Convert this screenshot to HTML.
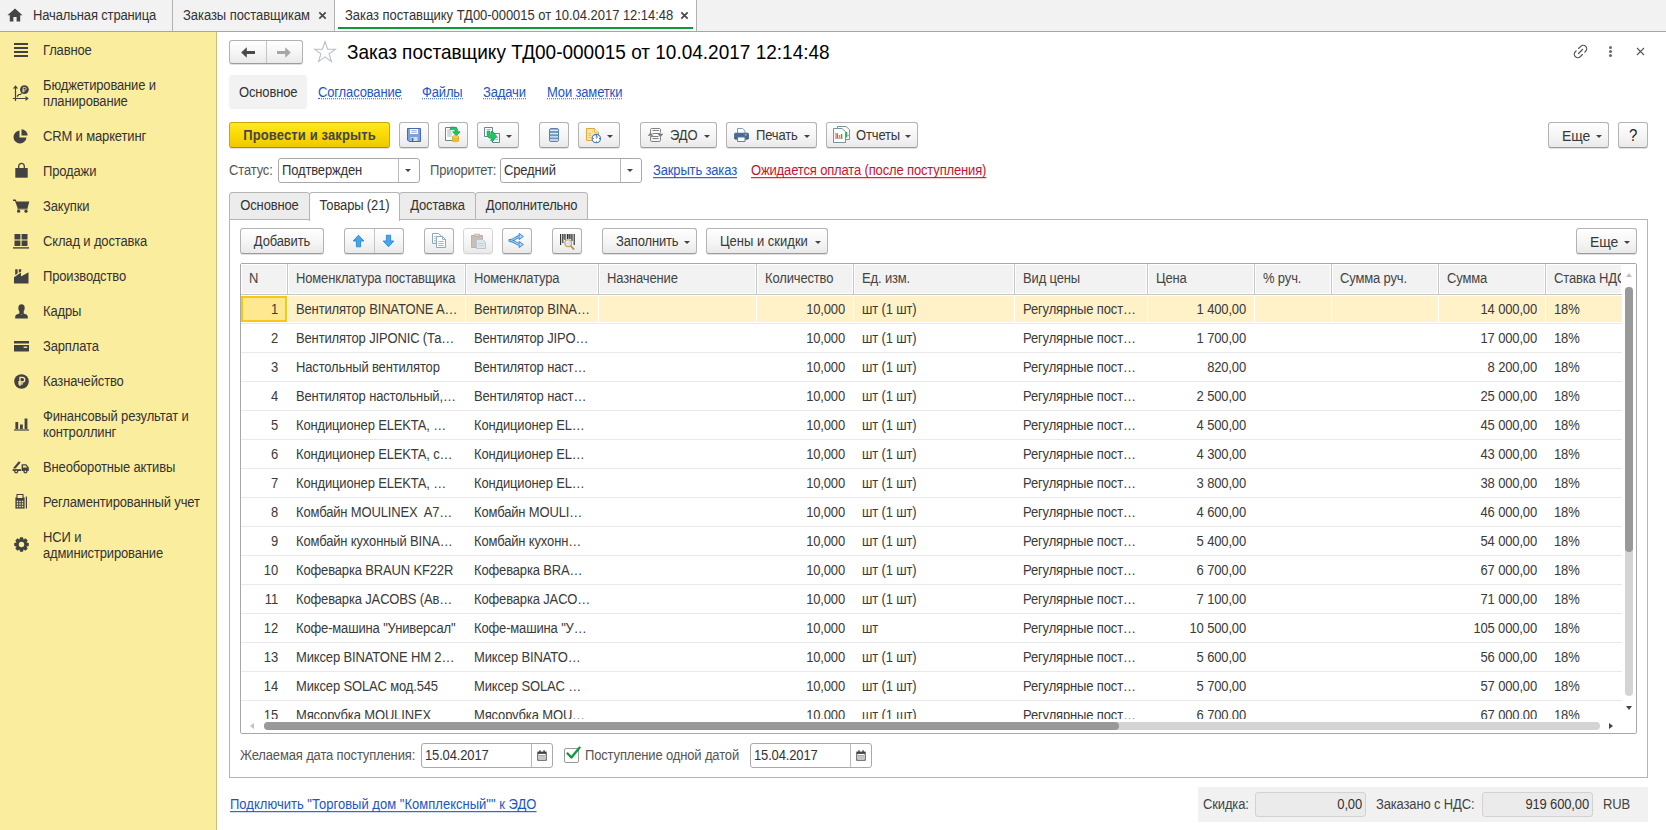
<!DOCTYPE html>
<html lang="ru">
<head>
<meta charset="utf-8">
<title>Заказ поставщику ТД00-000015 от 10.04.2017 12:14:48</title>
<style>
*{box-sizing:border-box;margin:0;padding:0}
html,body{width:1666px;height:830px;overflow:hidden;background:#fff}
body{position:relative;font-family:"Liberation Sans",Arial,sans-serif;font-size:13px;color:#333;line-height:16px;letter-spacing:-0.15px}
.t,.row span,.s{transform:scaleY(1.08);transform-origin:50% 78%}
.s{display:inline-block}
.abs{position:absolute}
.t{position:absolute;white-space:nowrap;height:16px;line-height:16px}
a,.lnk{color:#1b55c9;text-decoration:underline;text-underline-offset:1.5px;text-decoration-skip-ink:none}
.dot{text-decoration:none;border-bottom:1px dotted #2c61cc;height:14px;line-height:16px}
/* top tab bar */
#tabbar{position:absolute;left:0;top:0;width:1666px;height:32px;background:#f2f2f2;border-bottom:1px solid #a6a6a6}
.vsep{position:absolute;top:0;width:1px;height:31px;background:#b0b0b0}
#acttab{position:absolute;left:335px;top:0;width:361px;height:31px;background:#fff}
#actline{position:absolute;left:338px;top:27px;width:355px;height:2px;background:#0d9a3c}
.tx{position:absolute;top:8px;font-size:15px;color:#444;font-weight:bold;line-height:16px}
/* sidebar */
#side{position:absolute;left:0;top:32px;width:217px;height:798px;background:#fbed9e;border-right:1px solid #cdbf78}
#side .t{left:43px;color:#333}
#side svg{position:absolute;left:13px}
/* buttons */
.btn{position:absolute;height:26px;border:1px solid #b3b3b3;border-bottom-color:#9c9c9c;border-radius:3px;background:linear-gradient(#ffffff,#f4f4f4 60%,#e9e9e9);box-shadow:0 1px 0 rgba(0,0,0,.12);text-align:center;line-height:26px;white-space:nowrap;color:#383838}
.btn.y{background:linear-gradient(#ffe922,#f8d800 55%,#efc900);border-color:#c9a900;border-bottom-color:#ab8f00;font-weight:bold;color:#45454a}
.dd{position:absolute;width:0;height:0;border-left:3px solid transparent;border-right:3px solid transparent;border-top:3px solid #444}
.inp{position:absolute;height:25px;border:1px solid #a9a9a9;border-radius:3px;background:#fff;line-height:24px;padding-left:3px;white-space:nowrap;color:#333}
.inp i{position:absolute;top:0;bottom:0;width:1px;background:#b9b9b9}
.ptab{position:absolute;top:192px;height:28px;border:1px solid #b5b5b5;background:#ececec;text-align:center;line-height:25px;color:#333;border-radius:3px 3px 0 0}
.ptab.act{top:192px;height:29px;background:#fff;border-bottom:0;line-height:25px}
#grid{position:absolute;left:240px;top:263px;width:1397px;height:471px;border:1px solid #a8a8a8;border-radius:2px;background:#fff;overflow:hidden}
#ghead{position:absolute;left:0;top:0;width:1381px;height:31px;border-bottom:1px solid #c6c6c6;background:#fff}
#ghead .hc{position:absolute;top:1px;height:28px;background:#f2f2f2;color:#444;white-space:nowrap;overflow:hidden;padding-left:7px;line-height:16px;padding-top:6px}
#ghead b{position:absolute;top:0;width:1px;height:30px;background:#c6c6c6}
#gbody{position:absolute;left:0;top:0;width:1381px;height:455px;overflow:hidden}
.row{position:absolute;left:0;width:1381px;height:29px;border-bottom:1px solid #e9e9e9}
.row span{position:absolute;top:7px;white-space:nowrap;color:#3a3a3a;line-height:16px;height:16px}
.row .r{text-align:right}
.row.sel{background:linear-gradient(#fff 0,#fff 1px,#fff1c8 1px,#fff1c8 27px,#fff 27px)}
.row.sel u{position:absolute;top:0;width:1px;height:28px;background:#fff}
.row.sel em{position:absolute;left:0;top:1px;width:46px;height:26px;border:2px solid #f8c713;background:#ffe88f}
#vsb{position:absolute;left:1381px;top:0;width:14px;height:456px;background:#fff}
#vsb .tr{position:absolute;left:3px;top:23px;width:8px;height:409px;border-radius:4px;background:#d4d4d4}
#vsb .th{position:absolute;left:3px;top:23px;width:8px;height:265px;border-radius:4px;background:#999}
#vsb .au{position:absolute;left:4px;top:9px;border-left:3px solid transparent;border-right:3px solid transparent;border-bottom:4px solid #c0c0c0}
#vsb .ad{position:absolute;left:4px;top:442px;border-left:3px solid transparent;border-right:3px solid transparent;border-top:4px solid #444}
#hsb{position:absolute;left:0;top:455px;width:1395px;height:14px;background:#fff}
#hsb .tr{position:absolute;left:23px;top:3px;width:1336px;height:8px;border-radius:4px;background:#d4d4d4}
#hsb .th{position:absolute;left:23px;top:3px;width:855px;height:8px;border-radius:4px;background:#999}
#hsb .al{position:absolute;left:9px;top:4px;border-top:3px solid transparent;border-bottom:3px solid transparent;border-right:4px solid #c0c0c0}
#hsb .ar{position:absolute;left:1368px;top:4px;border-top:3px solid transparent;border-bottom:3px solid transparent;border-left:4px solid #444}
.inp.ro{background:#ebebeb;border-color:#d2d2d2;text-align:right;padding-right:3px;line-height:24px}
</style>
</head>
<body>
<!-- ===== top tab bar ===== -->
<div id="tabbar">
  <svg class="abs" style="left:7px;top:8px" width="16" height="14" viewBox="0 0 16 14"><path d="M8 0.5 L0.5 7.2 H2.8 V13.5 H6.4 V9 H9.6 V13.5 H13.2 V7.2 H15.5 Z" fill="#444"/></svg>
  <span class="t" style="left:33px;top:8px">Начальная страница</span>
  <div class="vsep" style="left:172px"></div>
  <span class="t" style="left:183px;top:8px;letter-spacing:-0.05px">Заказы поставщикам</span>
  <svg class="abs" style="left:318px;top:11px" width="9" height="9" viewBox="0 0 9 9"><path d="M1.3 1.3L7.7 7.7M7.7 1.3L1.3 7.7" stroke="#4a4a4a" stroke-width="1.7"/></svg>
  <div class="vsep" style="left:334px"></div>
  <div id="acttab"></div>
  <span class="t" style="left:345px;top:8px;letter-spacing:-0.04px">Заказ поставщику ТД00-000015 от 10.04.2017 12:14:48</span>
  <svg class="abs" style="left:680px;top:11px" width="9" height="9" viewBox="0 0 9 9"><path d="M1.3 1.3L7.7 7.7M7.7 1.3L1.3 7.7" stroke="#4a4a4a" stroke-width="1.7"/></svg>
  <div id="actline"></div>
  <div class="vsep" style="left:696px"></div>
</div>

<!-- ===== sidebar ===== -->
<div id="side">
<svg class="abs" style="left:14px;top:11px" width="14" height="14" viewBox="0 0 14 14" ><path d="M0 0h14v2H0zM0 4h14v2H0zM0 8h14v2H0zM0 12h14v2H0z" fill="#424242"/></svg>
<svg class="abs" style="left:12px;top:53px" width="17" height="17" viewBox="0 0 17 17"><g fill="none" stroke="#424242" stroke-width="1.2"><path d="M3.5 16V1.2M0.8 13.5H15.6"/><path d="M1.6 3.6L3.5 1.2L5.4 3.6M13.4 11.6L15.8 13.5L13.4 15.4"/><path d="M5 11.5L6.8 9.5H8.4L9.6 8.4"/></g><circle cx="12.4" cy="4.6" r="4.4" fill="#424242"/><path d="M11.2 7.4V2.4h1.6a1.3 1.3 0 0 1 0 2.6H10.4M10.4 6.2h2.4" fill="none" stroke="#fbed9e" stroke-width="0.8"/></svg>
<svg class="abs" style="left:13px;top:97px" width="15" height="15" viewBox="0 0 15 15" ><path d="M6.5 1.5A6.5 6.5 0 1 0 13.5 8.5H6.5Z" fill="#424242"/><path d="M8.5 0.3A6.3 6.3 0 0 1 14.7 6.5H8.5Z" fill="#424242"/></svg>
<svg class="abs" style="left:15px;top:130px" width="13" height="16" viewBox="0 0 13 16" ><path d="M0.3 6H12.7V15.7H0.3Z" fill="#424242"/><path d="M3.7 8V4.2a2.8 2.8 0 0 1 5.6 0V8" fill="none" stroke="#424242" stroke-width="1.3"/></svg>
<svg class="abs" style="left:13px;top:167px" width="17" height="14" viewBox="0 0 17 14" ><path d="M0 0.6H2.6L3.6 2.5H16.3L14.6 9H4.6L2 1.9H0Z" fill="#424242"/><path d="M4.4 9.8H14.6" stroke="#424242" stroke-width="1.2"/><circle cx="5.6" cy="12.2" r="1.6" fill="#424242"/><circle cx="13" cy="12.2" r="1.6" fill="#424242"/></svg>
<svg class="abs" style="left:13px;top:202px" width="16" height="15" viewBox="0 0 16 15" ><path d="M1.5 0H7.4V5.4H1.5ZM8.6 0H14.5V5.4H8.6ZM1.5 6.6H7.4V12H1.5ZM8.6 6.6H14.5V12H8.6Z" fill="#424242"/><path d="M0 13.2H16V14.6H0Z" fill="#424242"/></svg>
<svg class="abs" style="left:14px;top:237px" width="15" height="15" viewBox="0 0 15 15" ><path d="M0 14.5V8.2L7 3.6V7.4L14.5 3.2V14.5Z" fill="#424242"/><path d="M1.2 6V0.3H3.6V4.6ZM4.8 3.8V0.3H7.2V2.4Z" fill="#424242"/></svg>
<svg class="abs" style="left:15px;top:272px" width="13" height="15" viewBox="0 0 13 15" ><ellipse cx="6.5" cy="4" rx="3.2" ry="3.8" fill="#424242"/><path d="M0.2 14.6V12.6C0.2 10.8 2.4 9.8 4.6 9.4L6.5 10.6L8.4 9.4C10.6 9.8 12.8 10.8 12.8 12.6V14.6Z" fill="#424242"/><path d="M4.3 7h4.4v3H4.3z" fill="#424242"/></svg>
<svg class="abs" style="left:14px;top:309px" width="15" height="11" viewBox="0 0 15 11" ><path d="M0 0H15V2.4H0ZM0 3.9H15V10.6H0Z" fill="#424242"/><path d="M9.6 5.6H13.2V6.9H9.6Z" fill="#fbed9e"/></svg>
<svg class="abs" style="left:14px;top:342px" width="15" height="15" viewBox="0 0 15 15" ><circle cx="7.5" cy="7.5" r="7.3" fill="#424242"/><path d="M6 12V3.4h2.4a2.3 2.3 0 0 1 0 4.6H4.2M4.2 9.9H9" fill="none" stroke="#fbed9e" stroke-width="1.3"/></svg>
<svg class="abs" style="left:14px;top:386px" width="15" height="13" viewBox="0 0 15 13" ><path d="M1.4 4H4.2V11H1.4ZM6 6.4H8.8V11H6ZM10.6 0.6H13.4V11H10.6Z" fill="#424242"/><path d="M0 11.4H15V12.6H0Z" fill="#424242"/></svg>
<svg class="abs" style="left:12px;top:428px" width="18" height="14" viewBox="0 0 18 14" ><path d="M9.6 4.2H14.2L16.8 7.4V11H9.6Z" fill="#424242"/><path d="M11 5.5H13.6L15.3 7.6H11Z" fill="#fbed9e"/><path d="M0.6 9.2H9V11H0.6Z" fill="#424242"/><path d="M1 8.2L6.8 1.2L8.6 2.6L3.6 8.6Z" fill="#424242"/><circle cx="4.2" cy="11.4" r="2" fill="#424242"/><circle cx="13.4" cy="11.4" r="2" fill="#424242"/><circle cx="4.2" cy="11.4" r="0.8" fill="#fbed9e"/><circle cx="13.4" cy="11.4" r="0.8" fill="#fbed9e"/></svg>
<svg class="abs" style="left:15px;top:462px" width="13" height="15" viewBox="0 0 13 15" ><path d="M0.4 3.4H9.6V14.6H0.4Z" fill="#424242"/><path d="M2 0.4H8V4.6H2Z" fill="#fbed9e" stroke="#424242" stroke-width="1.1"/><path d="M1.8 6.8h1.4v1.4H1.8zM4.3 6.8h1.4v1.4H4.3zM6.8 6.8h1.4v1.4H6.8zM1.8 9.3h1.4v1.4H1.8zM4.3 9.3h1.4v1.4H4.3zM6.8 9.3h1.4v1.4H6.8zM1.8 11.8h1.4v1.4H1.8zM4.3 11.8h1.4v1.4H4.3zM6.8 11.8h1.4v1.4H6.8z" fill="#fbed9e"/><path d="M11.4 2.6V14.6" stroke="#424242" stroke-width="1.2"/></svg>
<svg class="abs" style="left:14px;top:505px" width="15" height="15" viewBox="0 0 15 15" ><path d="M6.03 0.25L8.97 0.25L9.55 2.51L9.58 2.52L11.59 1.33L13.67 3.41L12.48 5.42L12.49 5.45L14.75 6.03L14.75 8.97L12.49 9.55L12.48 9.58L13.67 11.59L11.59 13.67L9.58 12.48L9.55 12.49L8.97 14.75L6.03 14.75L5.45 12.49L5.42 12.48L3.41 13.67L1.33 11.59L2.52 9.58L2.51 9.55L0.25 8.97L0.25 6.03L2.51 5.45L2.52 5.42L1.33 3.41L3.41 1.33L5.42 2.52L5.45 2.51Z" fill="#424242"/><circle cx="7.5" cy="7.5" r="2.7" fill="#fbed9e"/></svg>
  <span class="t" style="top:11px">Главное</span>
  <span class="t" style="top:46px">Бюджетирование и</span>
  <span class="t" style="top:62px">планирование</span>
  <span class="t" style="top:97px">CRM и маркетинг</span>
  <span class="t" style="top:132px">Продажи</span>
  <span class="t" style="top:167px">Закупки</span>
  <span class="t" style="top:202px">Склад и доставка</span>
  <span class="t" style="top:237px">Производство</span>
  <span class="t" style="top:272px">Кадры</span>
  <span class="t" style="top:307px">Зарплата</span>
  <span class="t" style="top:342px">Казначейство</span>
  <span class="t" style="top:377px">Финансовый результат и</span>
  <span class="t" style="top:393px">контроллинг</span>
  <span class="t" style="top:428px">Внеоборотные активы</span>
  <span class="t" style="top:463px">Регламентированный учет</span>
  <span class="t" style="top:498px">НСИ и</span>
  <span class="t" style="top:514px">администрирование</span>
</div>

<!-- ===== main ===== -->
<div id="main">
<!-- nav back/forward -->
<div class="btn" style="left:229px;top:40px;width:74px;height:24px"></div>
<div class="abs" style="left:266px;top:41px;width:1px;height:22px;background:#c4c4c4"></div>
<svg class="abs" style="left:241px;top:47px" width="14" height="11" viewBox="0 0 14 11"><path d="M5.8 0.2 L0.2 5.5 L5.8 10.8 V7 H14 V4 H5.8 Z" fill="#4a4a4a"/></svg>
<svg class="abs" style="left:277px;top:47px" width="14" height="11" viewBox="0 0 14 11"><path d="M8.2 0.2 L13.8 5.5 L8.2 10.8 V7 H0 V4 H8.2 Z" fill="#a6a6a6"/></svg>
<!-- star -->
<svg class="abs" style="left:313px;top:40px" width="24" height="24" viewBox="0 0 24 24"><path d="M12 1.6 L14.6 9.2 H22.4 L16.1 13.9 L18.5 21.6 L12 16.9 L5.5 21.6 L7.9 13.9 L1.6 9.2 H9.4 Z" fill="#fff" stroke="#b9bec4" stroke-width="1.1" stroke-linejoin="miter"/></svg>
<span class="t" style="left:347px;top:41px;letter-spacing:0;transform:scaleY(1.06);font-size:19px;line-height:24px;height:24px;color:#000">Заказ поставщику ТД00-000015 от 10.04.2017 12:14:48</span>
<!-- right icons -->
<svg class="abs" style="left:1572px;top:43px" width="17" height="17" viewBox="0 0 17 17" fill="none" stroke="#555" stroke-width="1.25" stroke-linecap="round"><g transform="translate(8.5 8.5) rotate(-45)"><path d="M0.8 -3.5H3.8A3.5 3.5 0 0 1 3.8 3.5H2.6"/><path d="M-0.8 3.5H-3.8A3.5 3.5 0 0 1 -3.8 -3.5H-2.6"/><path d="M-2.8 0H2.8"/></g></svg>
<div class="abs" style="left:1609px;top:46px;width:3px;height:3px;border-radius:2px;background:#6a6a6a;box-shadow:0 4px 0 #6a6a6a,0 8px 0 #6a6a6a"></div>
<svg class="abs" style="left:1636px;top:47px" width="9" height="9" viewBox="0 0 9 9"><path d="M1 1L8 8M8 1L1 8" stroke="#555" stroke-width="1.1"/></svg>

<!-- subnav -->
<div class="abs" style="left:229px;top:75px;width:78px;height:34px;background:#f2f2f2;border-radius:3px"></div>
<span class="t" style="left:239px;top:85px">Основное</span>
<span class="t lnk dot" style="left:318px;top:85px">Согласование</span>
<span class="t lnk dot" style="left:422px;top:85px">Файлы</span>
<span class="t lnk dot" style="left:483px;top:85px">Задачи</span>
<span class="t lnk dot" style="left:547px;top:85px">Мои заметки</span>

<!-- command bar -->
<div class="btn y" style="left:229px;top:122px;width:161px;letter-spacing:0.13px"><span class="s">Провести и закрыть</span></div>
<div class="btn" style="left:399px;top:122px;width:30px"></div>
<div class="btn" style="left:438px;top:122px;width:30px"></div>
<div class="btn" style="left:477px;top:122px;width:42px"></div><i class="dd" style="left:506px;top:135px"></i>
<div class="btn" style="left:539px;top:122px;width:30px"></div>
<div class="btn" style="left:578px;top:122px;width:42px"></div><i class="dd" style="left:607px;top:135px"></i>
<div class="btn" style="left:640px;top:122px;width:77px;text-align:left;padding-left:29px"><span class="s">ЭДО</span></div><i class="dd" style="left:704px;top:135px"></i>
<div class="btn" style="left:726px;top:122px;width:91px;text-align:left;padding-left:29px"><span class="s">Печать</span></div><i class="dd" style="left:804px;top:135px"></i>
<div class="btn" style="left:826px;top:122px;width:92px;text-align:left;padding-left:29px"><span class="s">Отчеты</span></div><i class="dd" style="left:905px;top:135px"></i>
<div class="btn" style="left:1548px;top:122px;width:61px;text-align:left;padding-left:13px;font-size:14px"><span class="s">Еще</span></div><i class="dd" style="left:1596px;top:135px"></i>
<div class="btn" style="left:1618px;top:122px;width:30px;font-size:15px;color:#222"><span class="s">?</span></div>

<svg class="abs" style="left:407px;top:128px" width="14" height="14" viewBox="0 0 14 14" ><path d="M0.5 0.5H13.5V13.5H2L0.5 12Z" fill="#7ea0dd" stroke="#4668ad"/><path d="M3 1H11V6H3Z" fill="#fff"/><path d="M4.2 2.6H9.8M4.2 4.3H9.8" stroke="#8aa6d8" stroke-width="0.9"/><path d="M3.5 9H10.5V13H3.5Z" fill="#d8dce4"/><path d="M4.6 9.8H6.4V13H4.6Z" fill="#4668ad"/></svg>
<svg class="abs" style="left:444px;top:126px" width="17" height="17" viewBox="0 0 17 17" ><path d="M1.5 1.5H12.5V14.5H1.5Z" fill="#fff" stroke="#5f8a96"/><path d="M3.2 4H7M3.2 6H7.5M3.2 8H8M3.2 10H7.5" stroke="#9aa8ae" stroke-width="0.9"/><path d="M6.5 1.2H10.2C12.4 1.2 13.6 2.6 13.6 4.6V5.8H16L12.3 9.8L8.6 5.8H11V4.8C11 3.9 10.5 3.6 9.6 3.6H6.5Z" fill="#1fc866" stroke="#109a48" stroke-width="0.8"/><path d="M8.5 10.5C8.5 9.4 14.5 9.4 14.5 10.5V15C14.5 16.1 8.5 16.1 8.5 15Z" fill="#f7d04a" stroke="#d9a81c" stroke-width="0.8"/><path d="M8.5 12C9.5 13 13.5 13 14.5 12M8.5 13.8C9.5 14.8 13.5 14.8 14.5 13.8" fill="none" stroke="#d9a81c" stroke-width="0.8"/></svg>
<svg class="abs" style="left:484px;top:126px" width="17" height="18" viewBox="0 0 17 18" ><path d="M0.5 1.5H8.5V10.5H0.5Z" fill="#fff" stroke="#5f8a96"/><path d="M2.5 3.6H6.5" stroke="#9ab0b8"/><path d="M8.5 7.5H15.5V16.5H8.5Z" fill="#fff" stroke="#5f8a96"/><path d="M11.5 11.5H14M11.5 13.5H14" stroke="#9ab0b8" stroke-width="0.9"/><path d="M3.2 5.2H5.8V8.2C5.8 9.2 7 9.2 7 8.2V5.6H8.6L12.8 10.4L8.8 15.2L6.6 14.6L8.4 12.2C5 12.6 3.2 11 3.2 8.6Z" fill="#1fc866" stroke="#109a48" stroke-width="0.8"/></svg>
<svg class="abs" style="left:549px;top:128px" width="10" height="14" viewBox="0 0 10 14" ><rect x="0.5" y="0.5" width="9" height="13" rx="1.6" fill="#7fa6c8" stroke="#5583ad"/><path d="M1 2.4H9M1 5.6H9M1 8.8H9M1 12H9" stroke="#dbe7f1" stroke-width="1.3"/><path d="M1 4H9M1 7.2H9M1 10.4H9" stroke="#5583ad" stroke-width="0.6"/></svg>
<svg class="abs" style="left:586px;top:128px" width="15" height="16" viewBox="0 0 15 16" ><path d="M0.5 0.5H8.5L12.5 4.2V12.5H0.5Z" fill="#fbe59b" stroke="#e0a93b"/><path d="M8.5 0.5V4.2H12.5" fill="#fff6d6" stroke="#e0a93b" stroke-width="0.8"/><path d="M2.5 5.5H5M2.5 7.5H5M2.5 9.5H5M6 3H7" stroke="#d8b866" stroke-width="0.8"/><circle cx="10.3" cy="10.6" r="4.2" fill="#fff" stroke="#3f7fc4" stroke-width="1.1"/><path d="M10.3 10.6V8.2L12 9" fill="#7fb1e8" stroke="#3f7fc4" stroke-width="0.7"/><path d="M9.8 6.9h1v1h-1zM9.8 13.3h1v1h-1zM6.6 10.1h1v1h-1zM13 10.1h1v1h-1z" fill="#e02020"/></svg>
<svg class="abs" style="left:647px;top:128px" width="17" height="14" viewBox="0 0 17 14"><g fill="none" stroke="#808080" stroke-width="1"><path d="M3.5 5V1.7Q3.5 0.5 4.7 0.5H12.3Q13.5 0.5 13.5 1.7V4.6"/><path d="M13.5 9.2V12.3Q13.5 13.5 12.3 13.5H4.7Q3.5 13.5 3.5 12.3V8.5"/><path d="M5.5 2.5H12M5.5 5.5H13.5M3.5 8.5H11.5M5.5 10.5H11.5"/></g><path d="M0.6 7.8L3.5 4.4L6.4 7.8Z" fill="#7a7a7a"/><path d="M10.6 5.8L13.5 9.2L16.4 5.8Z" fill="#7a7a7a"/></svg>
<svg class="abs" style="left:734px;top:128px" width="15" height="14" viewBox="0 0 15 14"><path d="M3.5 5.5V0.5H8.6L11 2.8V5.5" fill="#fff" stroke="#6f8db0" stroke-width="0.9"/><rect x="0.4" y="5.2" width="14.2" height="6" rx="1.2" fill="#456b98" stroke="#3a5d88" stroke-width="0.8"/><path d="M3.6 9H11V13.5H3.6Z" fill="#fff" stroke="#52739c" stroke-width="0.9"/><path d="M10.8 6.4h1.8v0.9h-1.8z" fill="#dfe8f2"/></svg>
<svg class="abs" style="left:833px;top:126px" width="17" height="17" viewBox="0 0 17 17" ><path d="M4.5 0.5H13L16.5 3.6V13.5H4.5Z" fill="#fff" stroke="#6b8796" stroke-width="0.9"/><path d="M0.5 2.5H9L12.5 5.6V16.5H0.5Z" fill="#fff" stroke="#6b8796" stroke-width="0.9"/><path d="M2.4 6.5V12.5M2.4 12.5H10" stroke="#999" stroke-width="0.7" fill="none"/><path d="M3.4 7.2h1.5v5h-1.5z" fill="#e0483a"/><path d="M5.6 9h1.5v3.2H5.6z" fill="#e8922a"/><path d="M7.8 8h1.5v4.2H7.8z" fill="#3aa84a"/><path d="M13.6 6v5.5" stroke="#3aa84a" stroke-width="1.4"/><path d="M14.4 9.6h1.4" stroke="#6b8796" stroke-width="0.8"/></svg>
<!-- status row -->
<span class="t" style="left:229px;top:163px;color:#555">Статус:</span>
<div class="inp" style="left:278px;top:158px;width:142px"><span class="s">Подтвержден</span><i style="left:119px"></i></div><i class="dd" style="left:405px;top:169px"></i>
<span class="t" style="left:430px;top:163px;color:#555">Приоритет:</span>
<div class="inp" style="left:500px;top:158px;width:142px"><span class="s">Средний</span><i style="left:119px"></i></div><i class="dd" style="left:627px;top:169px"></i>
<span class="t lnk" style="left:653px;top:163px">Закрыть заказ</span>
<span class="t lnk" style="left:751px;top:163px;color:#c8102e">Ожидается оплата (после поступления)</span>

<!-- page tabs -->
<div class="abs" style="left:229px;top:219px;width:1419px;height:559px;border:1px solid #b5b5b5;background:#fff"></div>
<div class="ptab" style="left:229px;width:81px"><span class="s">Основное</span></div>
<div class="ptab" style="left:399px;width:77px"><span class="s">Доставка</span></div>
<div class="ptab" style="left:475px;width:113px"><span class="s">Дополнительно</span></div>
<div class="ptab act" style="left:309px;width:91px"><span class="s">Товары (21)</span></div>
<!-- sub toolbar -->
<div class="btn" style="left:240px;top:228px;width:84px"><span class="s">Добавить</span></div>
<div class="btn" style="left:344px;top:228px;width:60px"></div>
<div class="abs" style="left:374px;top:229px;width:1px;height:24px;background:#c4c4c4"></div>
<div class="btn" style="left:424px;top:228px;width:30px"></div>
<div class="btn" style="left:463px;top:228px;width:30px;border-color:#d4d4d4;box-shadow:0 1px 0 rgba(0,0,0,.05)"></div>
<div class="btn" style="left:502px;top:228px;width:30px"></div>
<div class="btn" style="left:552px;top:228px;width:30px"></div>
<div class="btn" style="left:602px;top:228px;width:95px;text-align:left;padding-left:13px"><span class="s">Заполнить</span></div><i class="dd" style="left:684px;top:241px"></i>
<div class="btn" style="left:706px;top:228px;width:122px;text-align:left;padding-left:13px;letter-spacing:0"><span class="s">Цены и скидки</span></div><i class="dd" style="left:815px;top:241px"></i>
<div class="btn" style="left:1576px;top:228px;width:61px;text-align:left;padding-left:13px;font-size:14px"><span class="s">Еще</span></div><i class="dd" style="left:1624px;top:241px"></i>

<svg class="abs" style="left:352px;top:234px" width="13" height="14" viewBox="0 0 13 14" ><path d="M6.5 1.2L11.8 7H8.6V12.8H4.4V7H1.2Z" fill="#42a7ee" stroke="#2a86cf" stroke-width="0.9" stroke-linejoin="round"/></svg>
<svg class="abs" style="left:382px;top:234px" width="13" height="14" viewBox="0 0 13 14" ><path d="M6.5 12.8L11.8 7H8.6V1.2H4.4V7H1.2Z" fill="#42a7ee" stroke="#2a86cf" stroke-width="0.9" stroke-linejoin="round"/></svg>
<svg class="abs" style="left:432px;top:233px" width="15" height="15" viewBox="0 0 15 15"><path d="M0.5 0.5H6.5L9.5 3.2V10.5H0.5Z" fill="#fff" stroke="#7f9fb8" stroke-width="0.9"/><path d="M2 3.5H4.5M2 5.5H4M2 7.5H4M2 9H4" stroke="#9db6c9" stroke-width="0.7"/><path d="M4.5 3.5H10.5L13.5 6.4V14.5H4.5Z" fill="#fff" stroke="#7f9fb8" stroke-width="0.9"/><path d="M10.5 3.5V6.4H13.5" fill="none" stroke="#7f9fb8" stroke-width="0.8"/><path d="M6.3 8.5H11.7M6.3 10.5H11.7M6.3 12.5H11.7" stroke="#8aa9c4" stroke-width="0.8"/></svg>
<svg class="abs" style="left:471px;top:233px" width="15" height="16" viewBox="0 0 15 16" ><path d="M0.5 2.5H11.5V14.5H0.5Z" fill="#c9bdb5" stroke="#b9ada5" stroke-width="0.9"/><path d="M3.5 1.2H8.5V3.4H3.5Z" fill="#d8d4d0" stroke="#b5aca6" stroke-width="0.7"/><path d="M5.5 6.5H11.5L14.5 9.2V15.5H5.5Z" fill="#dfe6ea" stroke="#b4c2cb" stroke-width="0.9"/><path d="M7.2 10.5H12.8M7.2 12.5H12.8" stroke="#bccad3" stroke-width="0.8"/></svg>
<svg class="abs" style="left:508px;top:232px" width="17" height="17" viewBox="0 0 17 17"><g fill="none" stroke-linejoin="round"><path d="M12 4.5C8 4.5 6.5 8.5 1.8 8.5C6.5 8.5 8 12.5 12 12.5" stroke="#2f86cc" stroke-width="2.8"/><path d="M11.2 1.4L15.4 4.5L11.2 7.6ZM11.2 9.4L15.4 12.5L11.2 15.6Z" fill="#a9d4f5" stroke="#2f86cc" stroke-width="0.9"/><path d="M12.4 4.5C8 4.5 6.5 8.5 2 8.5C6.5 8.5 8 12.5 12.4 12.5" stroke="#a9d4f5" stroke-width="1.1"/></g></svg>
<svg class="abs" style="left:560px;top:234px" width="15" height="16" viewBox="0 0 15 16" ><path d="M0.6 0V11M2.8 0V9M5 0V6M7.4 0V5M9.8 0V5M12 0V7M14.2 0V11" stroke="#333" stroke-width="1.2"/><path d="M4 0V5" stroke="#333" stroke-width="0.6"/><path d="M8.4 0V4.6M11 0V5.4" stroke="#333" stroke-width="0.7"/><path d="M10.4 11.6L13.6 15" stroke="#b8904a" stroke-width="1.8" stroke-linecap="round"/><circle cx="8.2" cy="9.2" r="3.4" fill="#cfe4f7" stroke="#c9a25c" stroke-width="1.1"/><path d="M6.6 8.8A1.8 1.8 0 0 1 8.4 7.2" stroke="#fff" stroke-width="0.8" fill="none"/></svg>
<!-- grid -->
<div id="grid">
<div id="ghead">
<div class="hc" style="left:1px;width:44px"><span class="s">N</span></div>
<div class="hc" style="left:48px;width:175px"><span class="s">Номенклатура поставщика</span></div><b style="left:46px"></b>
<div class="hc" style="left:226px;width:130px"><span class="s">Номенклатура</span></div><b style="left:224px"></b>
<div class="hc" style="left:359px;width:155px"><span class="s">Назначение</span></div><b style="left:357px"></b>
<div class="hc" style="left:517px;width:94px"><span class="s">Количество</span></div><b style="left:515px"></b>
<div class="hc" style="left:614px;width:158px"><span class="s">Ед. изм.</span></div><b style="left:612px"></b>
<div class="hc" style="left:775px;width:130px"><span class="s">Вид цены</span></div><b style="left:773px"></b>
<div class="hc" style="left:908px;width:104px"><span class="s">Цена</span></div><b style="left:906px"></b>
<div class="hc" style="left:1015px;width:74px"><span class="s">% руч.</span></div><b style="left:1013px"></b>
<div class="hc" style="left:1092px;width:104px"><span class="s">Сумма руч.</span></div><b style="left:1090px"></b>
<div class="hc" style="left:1199px;width:104px"><span class="s">Сумма</span></div><b style="left:1197px"></b>
<div class="hc" style="left:1306px;width:74px"><span class="s">Ставка НДС</span></div><b style="left:1304px"></b>
</div>
<div id="gbody">
<div class="row sel" style="top:31px"><em></em><u style="left:46px"></u><u style="left:224px"></u><u style="left:357px"></u><u style="left:515px"></u><u style="left:612px"></u><u style="left:773px"></u><u style="left:906px"></u><u style="left:1013px"></u><u style="left:1090px"></u><u style="left:1197px"></u><u style="left:1304px"></u><span class="r n" style="left:0;width:37px">1</span><span style="left:55px">Вентилятор BINATONE A…</span><span style="left:233px">Вентилятор BINA…</span><span class="r n" style="left:524px;width:80px">10,000</span><span style="left:621px">шт (1 шт)</span><span style="left:782px">Регулярные пост…</span><span class="r n" style="left:915px;width:90px">1 400,00</span><span class="r n" style="left:1206px;width:90px">14 000,00</span><span class="n" style="left:1313px">18%</span></div>
<div class="row" style="top:60px"><span class="r n" style="left:0;width:37px">2</span><span style="left:55px">Вентилятор JIPONIC (Та…</span><span style="left:233px">Вентилятор JIPO…</span><span class="r n" style="left:524px;width:80px">10,000</span><span style="left:621px">шт (1 шт)</span><span style="left:782px">Регулярные пост…</span><span class="r n" style="left:915px;width:90px">1 700,00</span><span class="r n" style="left:1206px;width:90px">17 000,00</span><span class="n" style="left:1313px">18%</span></div>
<div class="row" style="top:89px"><span class="r n" style="left:0;width:37px">3</span><span style="left:55px">Настольный вентилятор</span><span style="left:233px">Вентилятор наст…</span><span class="r n" style="left:524px;width:80px">10,000</span><span style="left:621px">шт (1 шт)</span><span style="left:782px">Регулярные пост…</span><span class="r n" style="left:915px;width:90px">820,00</span><span class="r n" style="left:1206px;width:90px">8 200,00</span><span class="n" style="left:1313px">18%</span></div>
<div class="row" style="top:118px"><span class="r n" style="left:0;width:37px">4</span><span style="left:55px">Вентилятор настольный,…</span><span style="left:233px">Вентилятор наст…</span><span class="r n" style="left:524px;width:80px">10,000</span><span style="left:621px">шт (1 шт)</span><span style="left:782px">Регулярные пост…</span><span class="r n" style="left:915px;width:90px">2 500,00</span><span class="r n" style="left:1206px;width:90px">25 000,00</span><span class="n" style="left:1313px">18%</span></div>
<div class="row" style="top:147px"><span class="r n" style="left:0;width:37px">5</span><span style="left:55px">Кондиционер ELEKTA, …</span><span style="left:233px">Кондиционер EL…</span><span class="r n" style="left:524px;width:80px">10,000</span><span style="left:621px">шт (1 шт)</span><span style="left:782px">Регулярные пост…</span><span class="r n" style="left:915px;width:90px">4 500,00</span><span class="r n" style="left:1206px;width:90px">45 000,00</span><span class="n" style="left:1313px">18%</span></div>
<div class="row" style="top:176px"><span class="r n" style="left:0;width:37px">6</span><span style="left:55px">Кондиционер ELEKTA, с…</span><span style="left:233px">Кондиционер EL…</span><span class="r n" style="left:524px;width:80px">10,000</span><span style="left:621px">шт (1 шт)</span><span style="left:782px">Регулярные пост…</span><span class="r n" style="left:915px;width:90px">4 300,00</span><span class="r n" style="left:1206px;width:90px">43 000,00</span><span class="n" style="left:1313px">18%</span></div>
<div class="row" style="top:205px"><span class="r n" style="left:0;width:37px">7</span><span style="left:55px">Кондиционер ELEKTA, …</span><span style="left:233px">Кондиционер EL…</span><span class="r n" style="left:524px;width:80px">10,000</span><span style="left:621px">шт (1 шт)</span><span style="left:782px">Регулярные пост…</span><span class="r n" style="left:915px;width:90px">3 800,00</span><span class="r n" style="left:1206px;width:90px">38 000,00</span><span class="n" style="left:1313px">18%</span></div>
<div class="row" style="top:234px"><span class="r n" style="left:0;width:37px">8</span><span style="left:55px">Комбайн MOULINEX&nbsp; A7…</span><span style="left:233px">Комбайн MOULI…</span><span class="r n" style="left:524px;width:80px">10,000</span><span style="left:621px">шт (1 шт)</span><span style="left:782px">Регулярные пост…</span><span class="r n" style="left:915px;width:90px">4 600,00</span><span class="r n" style="left:1206px;width:90px">46 000,00</span><span class="n" style="left:1313px">18%</span></div>
<div class="row" style="top:263px"><span class="r n" style="left:0;width:37px">9</span><span style="left:55px">Комбайн кухонный BINA…</span><span style="left:233px">Комбайн кухонн…</span><span class="r n" style="left:524px;width:80px">10,000</span><span style="left:621px">шт (1 шт)</span><span style="left:782px">Регулярные пост…</span><span class="r n" style="left:915px;width:90px">5 400,00</span><span class="r n" style="left:1206px;width:90px">54 000,00</span><span class="n" style="left:1313px">18%</span></div>
<div class="row" style="top:292px"><span class="r n" style="left:0;width:37px">10</span><span style="left:55px">Кофеварка BRAUN KF22R</span><span style="left:233px">Кофеварка BRA…</span><span class="r n" style="left:524px;width:80px">10,000</span><span style="left:621px">шт (1 шт)</span><span style="left:782px">Регулярные пост…</span><span class="r n" style="left:915px;width:90px">6 700,00</span><span class="r n" style="left:1206px;width:90px">67 000,00</span><span class="n" style="left:1313px">18%</span></div>
<div class="row" style="top:321px"><span class="r n" style="left:0;width:37px">11</span><span style="left:55px">Кофеварка JACOBS (Ав…</span><span style="left:233px">Кофеварка JACO…</span><span class="r n" style="left:524px;width:80px">10,000</span><span style="left:621px">шт (1 шт)</span><span style="left:782px">Регулярные пост…</span><span class="r n" style="left:915px;width:90px">7 100,00</span><span class="r n" style="left:1206px;width:90px">71 000,00</span><span class="n" style="left:1313px">18%</span></div>
<div class="row" style="top:350px"><span class="r n" style="left:0;width:37px">12</span><span style="left:55px">Кофе-машина &quot;Универсал&quot;</span><span style="left:233px">Кофе-машина &quot;У…</span><span class="r n" style="left:524px;width:80px">10,000</span><span style="left:621px">шт</span><span style="left:782px">Регулярные пост…</span><span class="r n" style="left:915px;width:90px">10 500,00</span><span class="r n" style="left:1206px;width:90px">105 000,00</span><span class="n" style="left:1313px">18%</span></div>
<div class="row" style="top:379px"><span class="r n" style="left:0;width:37px">13</span><span style="left:55px">Миксер BINATONE HM 2…</span><span style="left:233px">Миксер BINATO…</span><span class="r n" style="left:524px;width:80px">10,000</span><span style="left:621px">шт (1 шт)</span><span style="left:782px">Регулярные пост…</span><span class="r n" style="left:915px;width:90px">5 600,00</span><span class="r n" style="left:1206px;width:90px">56 000,00</span><span class="n" style="left:1313px">18%</span></div>
<div class="row" style="top:408px"><span class="r n" style="left:0;width:37px">14</span><span style="left:55px">Миксер SOLAC мод.545</span><span style="left:233px">Миксер SOLAC …</span><span class="r n" style="left:524px;width:80px">10,000</span><span style="left:621px">шт (1 шт)</span><span style="left:782px">Регулярные пост…</span><span class="r n" style="left:915px;width:90px">5 700,00</span><span class="r n" style="left:1206px;width:90px">57 000,00</span><span class="n" style="left:1313px">18%</span></div>
<div class="row" style="top:437px"><span class="r n" style="left:0;width:37px">15</span><span style="left:55px">Мясорубка MOULINEX</span><span style="left:233px">Мясорубка MOU…</span><span class="r n" style="left:524px;width:80px">10,000</span><span style="left:621px">шт (1 шт)</span><span style="left:782px">Регулярные пост…</span><span class="r n" style="left:915px;width:90px">6 700,00</span><span class="r n" style="left:1206px;width:90px">67 000,00</span><span class="n" style="left:1313px">18%</span></div>
</div>
<div id="vsb"><i class="au"></i><div class="tr"></div><div class="th"></div><i class="ad"></i></div>
<div id="hsb"><i class="al"></i><div class="tr"></div><div class="th"></div><i class="ar"></i></div>
</div>
<!-- bottom fields -->
<span class="t" style="left:240px;top:748px;color:#555">Желаемая дата поступления:</span>
<div class="inp" style="left:421px;top:743px;width:132px"><span class="s">15.04.2017</span><i style="left:109px"></i></div>
<div class="inp" style="left:750px;top:743px;width:122px"><span class="s">15.04.2017</span><i style="left:99px"></i></div>
<div class="abs" style="left:564px;top:748px;width:15px;height:15px;border:1px solid #9a9a9a;border-radius:2px;background:#fff"></div>
<svg class="abs" style="left:566px;top:746px" width="16" height="14" viewBox="0 0 16 14"><path d="M1.6 7.4 L5.4 11.6 L13.6 1.6" fill="none" stroke="#0d9a3c" stroke-width="2.3" stroke-linecap="round" stroke-linejoin="round"/></svg>
<span class="t" style="left:585px;top:748px;color:#555">Поступление одной датой</span>
<svg class="abs" style="left:537px;top:750px" width="10" height="11" viewBox="0 0 10 11"><path d="M0.3 1.6H9.7V10.7H0.3Z" fill="#444"/><path d="M1.3 3.9H8.7V9.7H1.3Z" fill="#fff"/><path d="M2.2 0.2h1.4v2.2H2.2zM6.4 0.2h1.4v2.2H6.4z" fill="#444"/><path d="M2.4 5.2h1.2v1.2H2.4zM4.4 5.2h1.2v1.2H4.4zM6.4 5.2h1.2v1.2H6.4zM2.4 7.4h1.2v1.2H2.4zM4.4 7.4h1.2v1.2H4.4zM6.4 7.4h1.2v1.2H6.4z" fill="#444"/></svg>
<svg class="abs" style="left:856px;top:750px" width="10" height="11" viewBox="0 0 10 11"><path d="M0.3 1.6H9.7V10.7H0.3Z" fill="#444"/><path d="M1.3 3.9H8.7V9.7H1.3Z" fill="#fff"/><path d="M2.2 0.2h1.4v2.2H2.2zM6.4 0.2h1.4v2.2H6.4z" fill="#444"/><path d="M2.4 5.2h1.2v1.2H2.4zM4.4 5.2h1.2v1.2H4.4zM6.4 5.2h1.2v1.2H6.4zM2.4 7.4h1.2v1.2H2.4zM4.4 7.4h1.2v1.2H4.4zM6.4 7.4h1.2v1.2H6.4z" fill="#444"/></svg>
<!-- footer -->
<span class="t lnk" style="left:230px;top:797px;letter-spacing:0.02px">Подключить &quot;Торговый дом &quot;Комплексный&quot;&quot; к ЭДО</span>
<div class="abs" style="left:1198px;top:787px;width:450px;height:35px;background:#f1f1f1"></div>
<span class="t" style="left:1203px;top:797px;color:#444">Скидка:</span>
<div class="inp ro" style="left:1255px;top:792px;width:111px"><span class="s n">0,00</span></div>
<span class="t" style="left:1376px;top:797px;color:#444">Заказано с НДС:</span>
<div class="inp ro" style="left:1482px;top:792px;width:111px"><span class="s n">919 600,00</span></div>
<span class="t" style="left:1603px;top:797px;color:#444">RUB</span>
</div>
</body>
</html>
